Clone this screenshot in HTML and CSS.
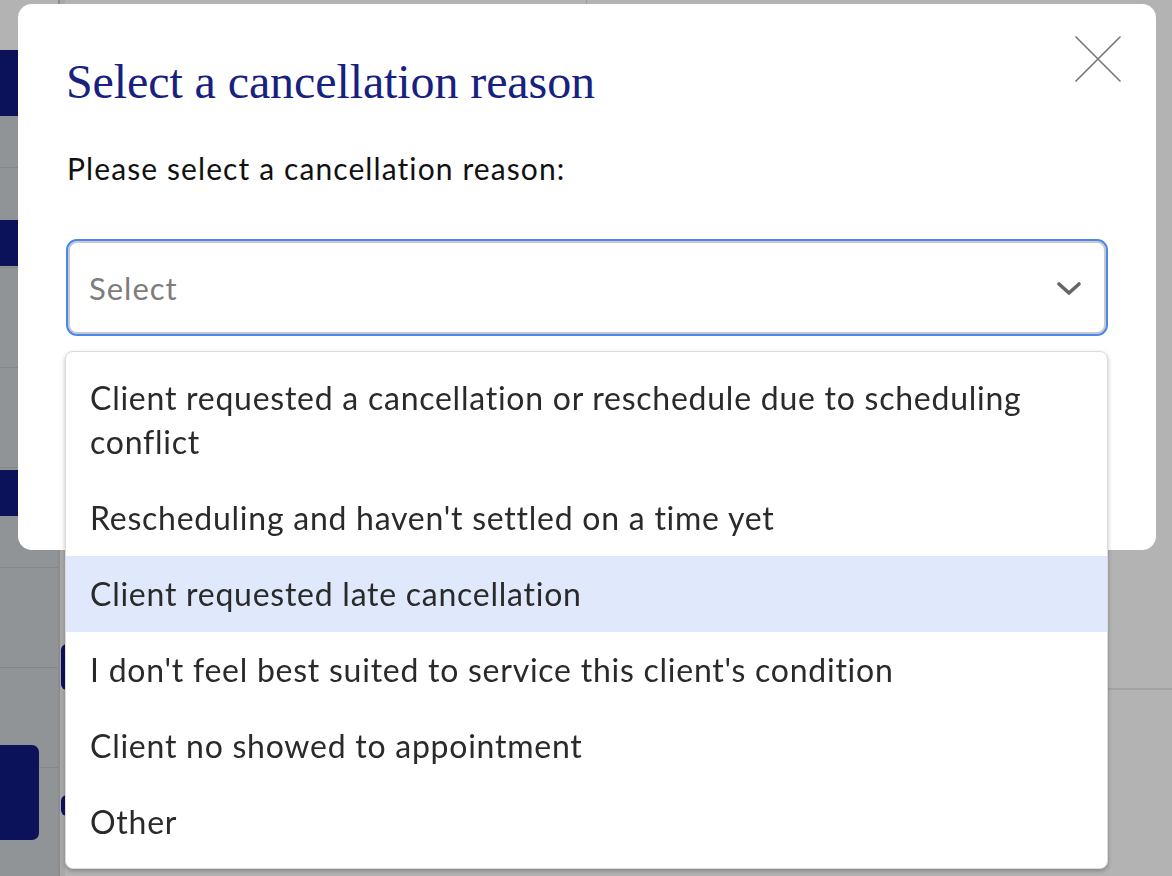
FILE: index.html
```html
<!DOCTYPE html>
<html lang="en">
<head>
<meta charset="utf-8">
<title>Select a cancellation reason</title>
<link rel="stylesheet" href="styles.css">
</head>
<body>
<div class="page">
  <aside class="sidebar">
    <div class="sb-top"></div>
    <div class="sb-navy sb-n1"></div>
    <div class="sb-row sb-r1"></div>
    <div class="sb-row sb-r2"><div class="sb-navy sb-n2"></div></div>
    <div class="sb-row sb-r3"></div>
    <div class="sb-row sb-r4"></div>
    <div class="sb-row sb-r5"><div class="sb-navy sb-n3"></div></div>
    <div class="sb-row sb-r6"></div>
    <div class="sb-row sb-r7"></div>
    <div class="sb-row sb-r8"><div class="sb-btn"></div></div>
  </aside>
  <div class="divider"></div>
  <main class="main">
    <div class="main-top"><div class="main-top-left"></div><div class="main-top-right"></div></div>
    <div class="main-body">
      <div class="main-row mr1"></div>
      <div class="main-row mr2"><span class="pill pill-a"></span></div>
      <div class="main-row mr3"><span class="pill pill-b"></span></div>
    </div>
  </main>
</div>

<div class="modal" role="dialog" aria-labelledby="modal-title">
  <button class="close" aria-label="Close">
    <svg width="48" height="48" viewBox="0 0 48 48"><path d="M1.5 1.5 L46.5 46.5 M46.5 1.5 L1.5 46.5" stroke="#777" stroke-width="1.6" fill="none"/></svg>
  </button>
  <h1 id="modal-title" class="title">Select a cancellation reason</h1>
  <p class="prompt">Please select a cancellation reason:</p>
  <div class="select-wrap">
    <div class="select">
      <span class="placeholder">Select</span>
      <svg class="chevron" width="26" height="16" viewBox="0 0 26 16"><path d="M3 3 L13 12 L23 3" stroke="#666" stroke-width="3.6" fill="none" stroke-linecap="round" stroke-linejoin="round"/></svg>
    </div>
    <ul class="menu">
      <li class="opt">Client requested a cancellation or reschedule due to scheduling conflict</li>
      <li class="opt">Rescheduling and haven't settled on a time yet</li>
      <li class="opt active">Client requested late cancellation</li>
      <li class="opt">I don't feel best suited to service this client's condition</li>
      <li class="opt">Client no showed to appointment</li>
      <li class="opt">Other</li>
    </ul>
  </div>
</div>
</body>
</html>
```

FILE: styles.css
```css
* { box-sizing: border-box; }
html, body { margin: 0; padding: 0; }
body {
  width: 1172px;
  height: 876px;
  overflow: hidden;
  background: #b3b3b3;
  font-family: "Lato", "Noto Sans", sans-serif;
}

.page {
  display: flex;
  height: 876px;
}

.sidebar {
  width: 58px;
  display: flex;
  flex-direction: column;
  background: #909497;
}
.sb-top { height: 50px; background: #b3b3b3; flex: none; }
.sb-navy { background: #0c1259; flex: none; }
.sb-n1 { height: 66px; }
.sb-row { flex: none; border-bottom: 1px solid #84888a; display: flex; flex-direction: column; justify-content: flex-end; }
.sb-r1 { height: 52px; }
.sb-r2 { height: 100px; }
.sb-n2 { height: 46px; margin-bottom: 1px; }
.sb-r3 { height: 100px; }
.sb-r4 { height: 100px; }
.sb-r5 { height: 100px; justify-content: flex-start; }
.sb-n3 { height: 46px; margin-top: 2px; }
.sb-r6 { height: 100px; }
.sb-r7 { height: 100px; }
.sb-r8 { height: 100px; justify-content: flex-start; border-bottom: none; }
.sb-btn { width: 39px; height: 95px; margin-top: -23px; background: #0c1259; border-radius: 0 7px 7px 0; }

.divider {
  width: 7px;
  background: #a9a9a9;
  border-left: 2px solid #8c8c8c;
}

.main { flex: 1; display: flex; flex-direction: column; }
.main-top { display: flex; height: 4px; }
.main-top-left { width: 522px; border-right: 1px solid #9c9c9c; }
.main-body { display: flex; flex-direction: column; }
.main-row { border-bottom: 2px solid #a2a2a2; }
.mr1 { height: 686px; }
.mr2 { height: 100px; border-bottom: none; }
.mr3 { height: 86px; border-bottom: none; }
.pill { display: block; width: 12px; background: #0c1259; border-radius: 6px; margin-left: -4px; }
.pill-a { height: 46px; margin-top: -46px; }
.pill-b { height: 21px; margin-top: 5px; }

.modal {
  position: fixed;
  left: 18px;
  top: 4px;
  width: 1138px;
  height: 546px;
  background: #fff;
  border-radius: 14px;
  padding: 50px 48px 0 48px;
}

.close {
  position: absolute;
  right: 34px;
  top: 31px;
  width: 48px;
  height: 48px;
  padding: 0;
  border: 0;
  background: transparent;
}
.close svg { display: block; }

.title {
  margin: 0;
  font-family: "Liberation Serif", "DejaVu Serif", serif;
  font-weight: 400;
  font-size: 48px;
  line-height: 56px;
  color: #17217f;
  letter-spacing: -0.1px;
}

.prompt {
  margin: 40px 0 0 1px;
  font-size: 30px;
  line-height: 36px;
  letter-spacing: 1.1px;
  color: #111;
}

.select-wrap { position: relative; margin-top: 53px; }

.select {
  height: 97px;
  border: 2px solid #4a87ec;
  border-radius: 11px;
  box-shadow: inset 0 0 0 2px #c9c9c9;
  display: flex;
  align-items: center;
  justify-content: space-between;
  padding: 0 24px 0 21px;
}
.placeholder { font-size: 31px; letter-spacing: 1px; color: #7d7d7d; }
.chevron { display: block; margin-top: 2px; }

.menu {
  position: absolute;
  left: -1px;
  right: 0;
  top: 112px;
  margin: 0;
  padding: 8px 0;
  list-style: none;
  background: #fff;
  border: 1px solid #dcdcdc;
  border-radius: 8px;
  box-shadow: 0 2px 4px rgba(0,0,0,0.25);
}
.opt {
  padding: 16px 24px;
  font-size: 32px;
  line-height: 44px;
  letter-spacing: 0.75px;
  color: #2a2a2a;
}
.opt.active { background: #dfe9fb; }
```
